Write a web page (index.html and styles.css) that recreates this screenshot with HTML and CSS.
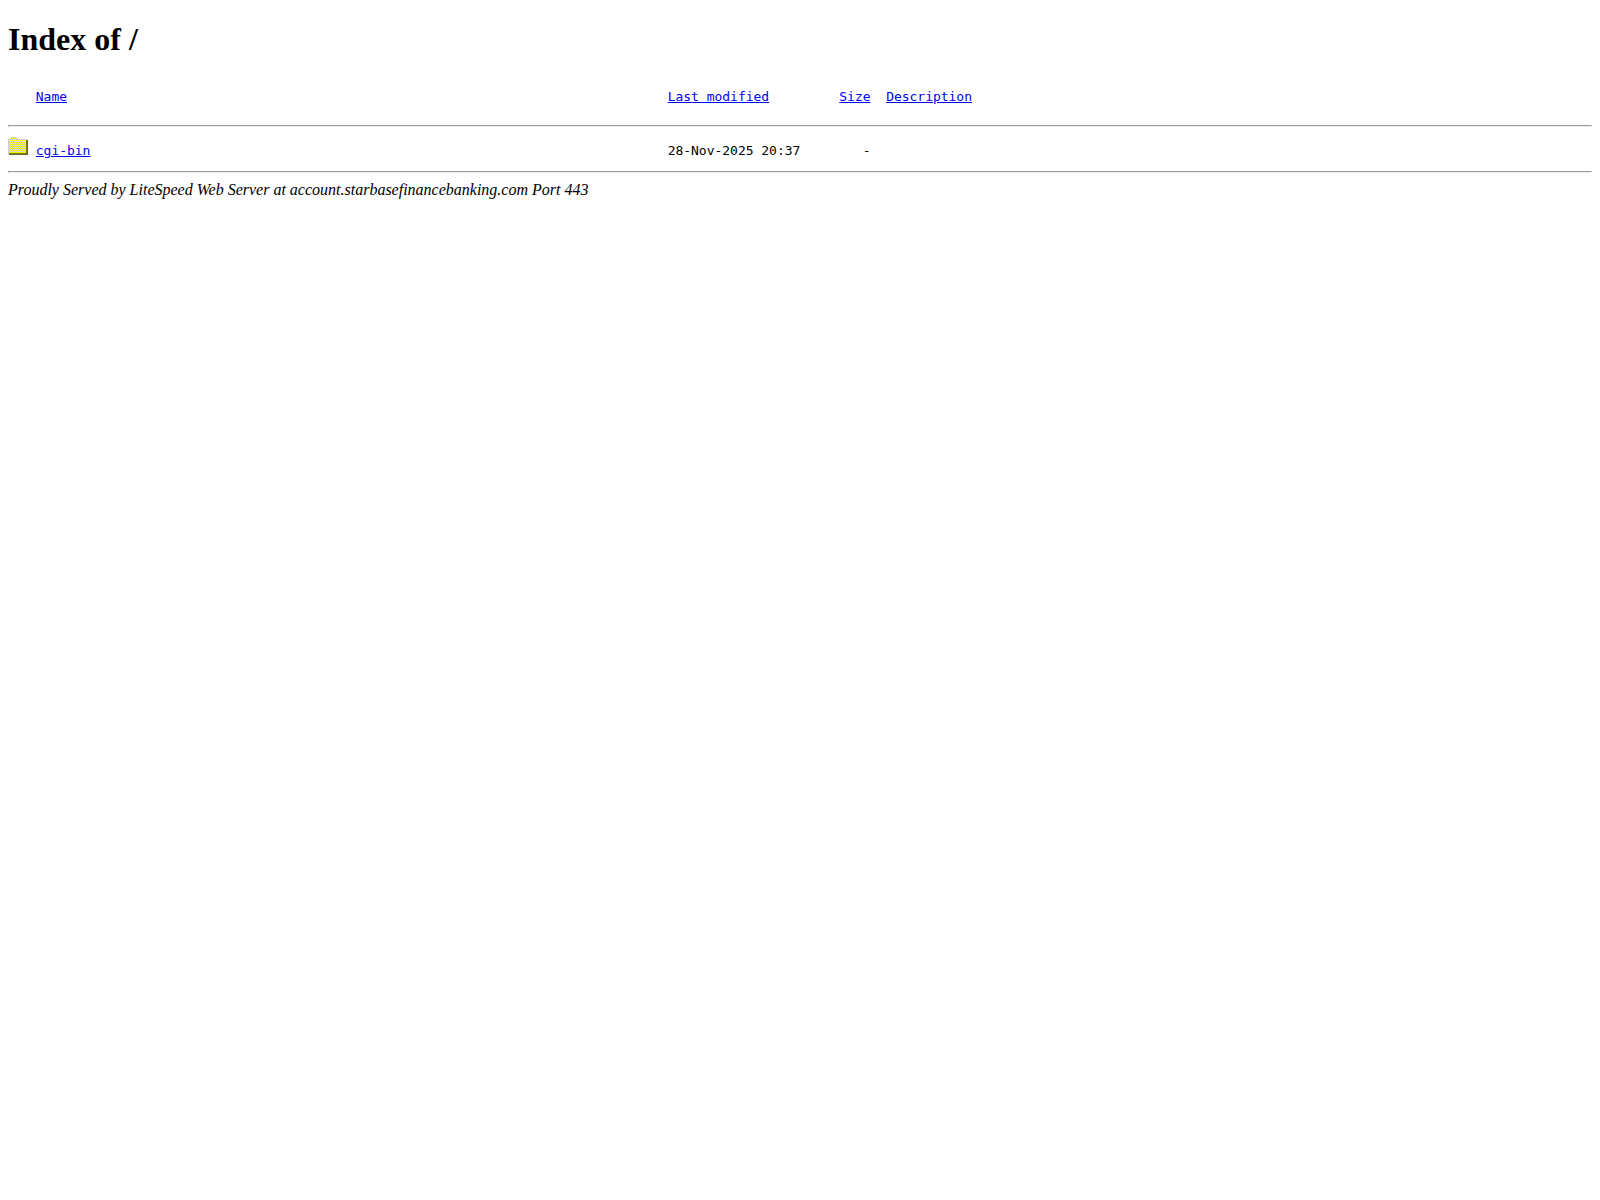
FILE: index.html
```html
<!DOCTYPE html>
<html>
<head>
<meta charset="UTF-8">
<title>Index of /</title>
<link rel="stylesheet" href="styles.css">
</head>
<body>
<h1>Index of /</h1>
<pre><span class="icon"></span> <a href="?ND">Name</a>                                                                             <a href="?MA">Last modified</a>         <a href="?SA">Size</a>  <a href="?DA">Description</a>

<hr><svg class="icon folder" width="20" height="20" viewBox="0 0 20 20"><defs><pattern id="dots" width="2" height="2" patternUnits="userSpaceOnUse"><rect width="2" height="2" fill="#ffff00"/><path fill="#cccccc" d="M1 0h1v1H1zM0 1h1v1H0z"/></pattern></defs><path fill="#cccccc" d="M3 3h6v1h1v1h9v15H0V5h2V4h1z"/><path fill="url(#dots)" d="M3 4h6v2h9v13H1V6h2z"/><path stroke="#ffffff" stroke-dasharray="1 1" d="M1 6.5h17"/><path fill="#808000" d="M18 6h1v13h-1z"/><path fill="#666633" d="M19 6h1v15H1v-1h18z"/><path fill="#808000" d="M1 19h18v1H1z"/></svg> <a href="cgi-bin/">cgi-bin</a>                                                                          28-Nov-2025 20:37        -  
</pre>
<hr>
<address>Proudly Served by LiteSpeed Web Server at account.starbasefinancebanking.com Port 443</address>
</body>
</html>
```

FILE: styles.css
```css
body{
	margin:8px;
	font-family:"Liberation Serif", "Times New Roman", serif;
	background:#fff;
	color:#000;
}
h1{
	margin-top:13.44px;
	margin-bottom:22.6px;
}
pre{
	font-family:"DejaVu Sans Mono", "Liberation Mono", monospace;
	font-size:13px;
	line-height:15px;
	letter-spacing:-0.026px;
	margin-bottom:13px;
}
pre hr{
	margin-top:5.5px;
	margin-bottom:7.5px;
}
.icon{
	display:inline-block;
	width:20px;
	height:20px;
	overflow:visible;
}
.folder{
	margin-bottom:1px;
}
```
